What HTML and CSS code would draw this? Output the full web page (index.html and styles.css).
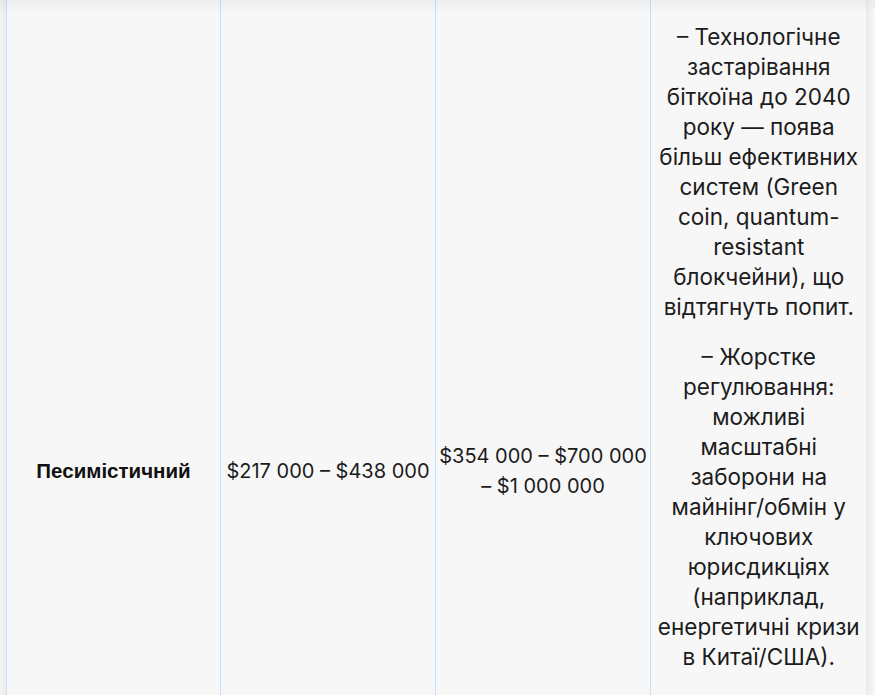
FILE: index.html
```html
<!DOCTYPE html>
<html lang="uk">
<head>
<meta charset="utf-8">
<title>Сценарії</title>
<link rel="stylesheet" href="styles.css">
</head>
<body>
<div class="top-shade"></div>
<div class="table-wrap">
  <table class="scenarios">
    <colgroup>
      <col class="c1">
      <col class="c2">
      <col class="c3">
      <col class="c4">
    </colgroup>
    <tbody>
      <tr class="row">
        <td class="name">Песимістичний</td>
        <td class="range">$217&nbsp;000 – $438&nbsp;000</td>
        <td class="range">$354&nbsp;000 – $700&nbsp;000 – $1&nbsp;000&nbsp;000</td>
        <td class="risks">
          <p>– Технологічне застарівання біткоїна до 2040 року — поява більш ефективних систем (Green coin, quantum-resistant блокчейни), що відтягнуть попит.</p>
          <p>– Жорстке регулювання: можливі масштабні заборони на майнінг/обмін у ключових юрисдикціях (наприклад, енергетичні кризи в Китаї/США).</p>
        </td>
      </tr>
    </tbody>
  </table>
</div>
</body>
</html>
```

FILE: styles.css
```css
html, body {
  margin: 0;
  padding: 0;
}
body {
  background: #f5f5f5;
  overflow: hidden;
  height: 695px;
}
.top-shade {
  position: absolute;
  left: 0;
  top: 0;
  width: 100%;
  height: 12px;
  background: linear-gradient(to bottom, rgba(0,0,0,0.045), rgba(0,0,0,0));
  z-index: 2;
}
.table-wrap {
  margin-left: 6px;
  width: 860px;
  overflow: hidden;
  background: #f7f7f7;
  box-shadow: 0 0 8px rgba(0,0,0,0.09);
}
.scenarios {
  border-collapse: collapse;
  table-layout: fixed;
  width: 860px;
  font-family: Inter, "Noto Sans", sans-serif;
  font-size: 20px;
  line-height: 30px;
  color: #1c1c1c;
}
.c1 { width: 214px; }
.c2 { width: 215px; }
.c3 { width: 215px; }
.c4 { width: 216px; }
.row {
  height: 942px;
}
.scenarios td {
  border-left: 1px solid #c4e0fa;
  padding: 2px 4px;
  text-align: center;
  vertical-align: middle;
}
.scenarios td.range {
  padding: 2px 1px;
}
.scenarios td.name {
  font-family: "Liberation Sans", Arial, sans-serif;
  font-weight: bold;
  font-size: 20.5px;
  color: #111;
}
.scenarios td.risks {
  vertical-align: top;
  font-size: 22.5px;
}
.risks p {
  margin: 20px 0;
}
```
